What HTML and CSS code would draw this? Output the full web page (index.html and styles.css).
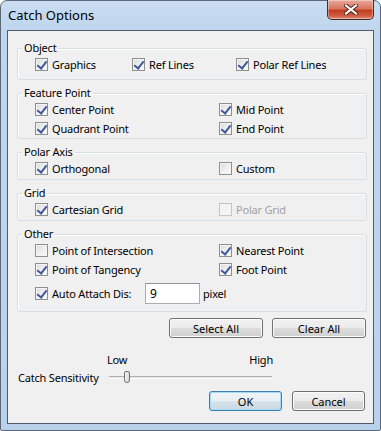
FILE: index.html
```html
<!DOCTYPE html>
<html lang="en">
<head>
    <meta charset="UTF-8">
    <title>Catch Options</title>
    <link rel="stylesheet" href="styles.css">
</head>
<body>
    <div class="window">
        <!-- Title bar -->
        <div class="titlebar">
            <span class="title">Catch Options</span>
            <button class="close">
                <svg width="14" height="11" viewBox="0 0 14 11">
                    <path d="M2 1.5 L12 9.5 M12 1.5 L2 9.5" stroke="#4a2018" stroke-width="4" stroke-linecap="square"/>
                    <path d="M2 1.5 L12 9.5 M12 1.5 L2 9.5" stroke="#fff" stroke-width="2.2" stroke-linecap="square"/>
                </svg>
            </button>
        </div>

        <div class="client">
            <fieldset class="group group-object">
                <legend>Object</legend>
                <div class="rows cols-3">
                    <label class="opt"><span class="box on"></span>Graphics</label>
                    <label class="opt"><span class="box on"></span>Ref Lines</label>
                    <label class="opt"><span class="box on"></span>Polar Ref Lines</label>
                </div>
            </fieldset>

            <fieldset class="group">
                <legend>Feature Point</legend>
                <div class="rows">
                    <label class="opt"><span class="box on"></span>Center Point</label>
                    <label class="opt"><span class="box on"></span>Mid Point</label>
                    <label class="opt"><span class="box on"></span>Quadrant Point</label>
                    <label class="opt"><span class="box on"></span>End Point</label>
                </div>
            </fieldset>

            <fieldset class="group group-single">
                <legend>Polar Axis</legend>
                <div class="rows">
                    <label class="opt"><span class="box on"></span>Orthogonal</label>
                    <label class="opt"><span class="box"></span>Custom</label>
                </div>
            </fieldset>

            <fieldset class="group group-single">
                <legend>Grid</legend>
                <div class="rows">
                    <label class="opt"><span class="box on"></span>Cartesian Grid</label>
                    <label class="opt disabled"><span class="box"></span>Polar Grid</label>
                </div>
            </fieldset>

            <fieldset class="group group-other">
                <legend>Other</legend>
                <div class="rows">
                    <label class="opt"><span class="box"></span>Point of Intersection</label>
                    <label class="opt"><span class="box on"></span>Nearest Point</label>
                    <label class="opt"><span class="box on"></span>Point of Tangency</label>
                    <label class="opt"><span class="box on"></span>Foot Point</label>
                </div>
                <div class="attach">
                    <label class="opt attach-label"><span class="box on"></span>Auto Attach Dis:</label>
                    <input class="field" type="text" value="9">
                    <span>pixel</span>
                </div>
            </fieldset>

            <div class="actions">
                <button class="btn btn-wide">Select All</button>
                <button class="btn btn-wide">Clear All</button>
            </div>

            <div class="sensitivity">
                <div class="ticks"><span>Low</span><span>High</span></div>
                <span class="sens-label">Catch Sensitivity</span>
                <div class="slider">
                    <div class="track"></div>
                    <div class="thumb"></div>
                </div>
            </div>

            <div class="actions actions-dialog">
                <button class="btn btn-default">OK</button>
                <button class="btn">Cancel</button>
            </div>
        </div>
    </div>
</body>
</html>
```

FILE: styles.css
```css
* {
    margin: 0;
    padding: 0;
    box-sizing: border-box;
}

body {
    font-family: "Noto Sans", "Open Sans", sans-serif;
    font-size: 11px;
    letter-spacing: -0.2px;
    color: #000;
    background: #fff;
}

/* Window frame */
.window {
    width: 381px;
    height: 431px;
    border: 1px solid #5d6977;
    border-radius: 7px 7px 2px 2px;
    background: linear-gradient(to bottom, #c9ddf2 0, #bfd6ee 30px, #b9d1ea 100%);
    padding: 0 6px 6px 6px;
    display: flex;
    flex-direction: column;
}

.titlebar {
    height: 29px;
    display: flex;
    justify-content: space-between;
    align-items: flex-start;
}

.title {
    padding: 5px 0 0 1px;
    font-size: 13px;
    letter-spacing: 0;
    line-height: 18px;
    color: #000;
}

.close {
    width: 47px;
    height: 20px;
    margin-top: -1px;
    border: 1px solid #4b2a22;
    border-top: none;
    border-radius: 0 0 5px 5px;
    background: linear-gradient(to bottom, #e9a99b 0, #d8775f 45%, #c23d1e 55%, #d05e44 85%, #e19584 100%);
    box-shadow: inset 0 0 0 1px rgba(255, 255, 255, 0.35);
    display: flex;
    justify-content: center;
    align-items: center;
}

/* Client area */
.client {
    flex: 1;
    border: 1px solid #4f5b69;
    background: #f0f0f0;
    padding: 10px 6px 0 9px;
    display: flex;
    flex-direction: column;
}

/* Group boxes */
.group {
    border: 1px solid #d5dfe5;
    border-radius: 3px;
    margin-bottom: 6px;
    box-shadow: inset 1px 1px 0 #fff;
}

.group legend {
    margin-left: 4px;
    padding: 0 2px;
    line-height: 14px;
}

.group-object {
    padding-bottom: 5px;
}

.group-single {
    padding-bottom: 1px;
}

.group-other {
    padding-bottom: 7px;
    margin-bottom: 0;
}

.rows {
    display: grid;
    grid-template-columns: 184px auto;
    padding-left: 17px;
}

.rows.cols-3 {
    grid-template-columns: 97px 104px auto;
}

.opt {
    height: 19px;
    display: flex;
    align-items: center;
    gap: 4px;
    white-space: nowrap;
}

.opt.disabled {
    color: #a0a0a0;
}

/* Checkbox */
.box {
    width: 13px;
    height: 13px;
    border: 1px solid #8e8f8f;
    background: linear-gradient(135deg, #d9dadb 0, #eeeeee 50%, #fbfbfb 100%);
    box-shadow: inset 0 0 0 1px #f4f4f4;
    position: relative;
    flex-shrink: 0;
}

.box.on::after {
    content: "";
    position: absolute;
    left: 3px;
    top: 0;
    width: 4px;
    height: 8px;
    border: solid #40599a;
    border-width: 0 2px 2px 0;
    transform: rotate(38deg);
}

.opt.disabled .box {
    border-color: #c5c5c5;
    background: #f4f4f4;
    box-shadow: none;
}

/* Auto attach row */
.attach {
    margin-top: 3px;
    height: 22px;
    display: flex;
    align-items: center;
    padding-left: 17px;
}

.attach-label {
    width: 110px;
}

.field {
    width: 55px;
    height: 21px;
    border: 1px solid #abadb3;
    border-top-color: #8e9199;
    background: #fff;
    font: inherit;
    font-size: 12px;
    padding: 0 4px;
    margin-right: 3px;
}

/* Buttons */
.actions {
    display: flex;
    justify-content: flex-end;
    gap: 9px;
    margin-top: 6px;
    padding-right: 1px;
}

.actions-dialog {
    margin-top: 4px;
    gap: 10px;
    padding-right: 2px;
}

.btn {
    width: 73px;
    height: 20px;
    font: inherit;
    color: #000;
    border: 1px solid #707070;
    border-radius: 3px;
    background: linear-gradient(to bottom, #f2f2f2 0, #ebebeb 50%, #dddddd 51%, #cfcfcf 100%);
    box-shadow: inset 0 0 0 1px #fcfcfc;
}

.btn-wide {
    width: 94px;
}

.btn-default {
    border-color: #3c7fb1;
    box-shadow: inset 0 0 0 1px #a6dbf7;
    background: linear-gradient(to bottom, #f1f5f8 0, #e7eef3 50%, #d7e2ea 51%, #cbd9e3 100%);
}

/* Sensitivity slider */
.sensitivity {
    margin-top: 14px;
    padding-left: 1px;
    display: grid;
    grid-template-columns: 89px 166px;
    grid-template-rows: 15px 20px;
    align-items: center;
}

.ticks {
    grid-column: 2;
    display: flex;
    justify-content: space-between;
    line-height: 15px;
}

.sens-label {
    grid-column: 1;
    white-space: nowrap;
}

.slider {
    position: relative;
    height: 20px;
    display: flex;
    align-items: center;
    padding: 0 1px 0 2px;
}

.track {
    width: 100%;
    height: 3px;
    border-top: 1px solid #b0b0b0;
    border-bottom: 1px solid #fdfdfd;
    background: #e3e3e3;
}

.thumb {
    position: absolute;
    left: 17px;
    top: 4px;
    width: 6px;
    height: 12px;
    border: 1px solid #707070;
    border-radius: 2px 2px 3px 3px;
    background: linear-gradient(to right, #f5f5f5, #d8d8d8);
}
```
